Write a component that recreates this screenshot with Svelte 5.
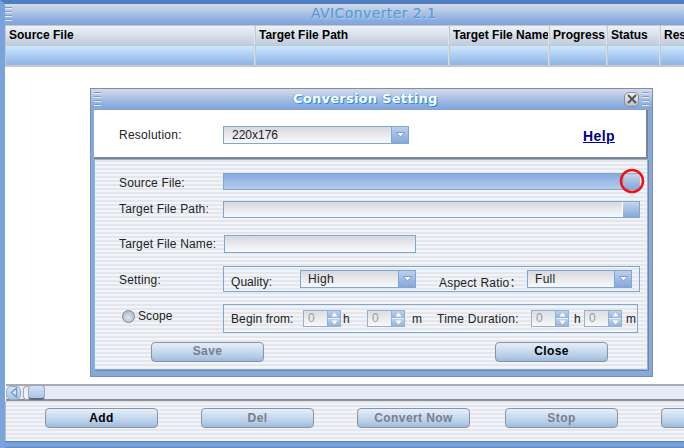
<script>
  const columns = [
    { name: 'Source File', width: 249 },
    { name: 'Target File Path', width: 193 },
    { name: 'Target File Name', width: 99 },
    { name: 'Progress', width: 57 },
    { name: 'Status', width: 52 },
    { name: 'Result', width: 60 }
  ];
  const actions = [
    { name: 'Add', on: true },
    { name: 'Del', on: false },
    { name: 'Convert Now', on: false },
    { name: 'Stop', on: false },
    { name: '', on: false }
  ];
</script>

{#snippet grip()}
  <span class="grip"><i></i><i></i><i></i><i></i></span>
{/snippet}

{#snippet arrow()}
  <span class="drop"><svg width="9" height="6" viewBox="0 0 9 6"><path d="M0.5 0.5H8.5L4.5 5Z" fill="#fff" stroke="#6f8fb5" stroke-width="0.8"/></svg></span>
{/snippet}

{#snippet spin()}
  <span class="spin">
    <span class="spin-val">0</span>
    <span class="spin-btns">
      <span><svg width="7" height="5" viewBox="0 0 7 5"><path d="M3.5 0.5L6.5 4.5H0.5Z" fill="#fff"/></svg></span>
      <span><svg width="7" height="5" viewBox="0 0 7 5"><path d="M0.5 0.5H6.5L3.5 4.5Z" fill="#fff"/></svg></span>
    </span>
  </span>
{/snippet}

<div class="app">
  <header class="titlebar">
    {@render grip()}
    <span class="app-title">AVIConverter 2.1</span>
  </header>

  <div class="table">
    <div class="thead">
      {#each columns as c}
        <div class="th" style={`width:${c.width}px`}>{c.name}</div>
      {/each}
    </div>
    <div class="tbody">
      {#each columns as c}
        <div class="td" style={`width:${c.width}px`}></div>
      {/each}
    </div>
  </div>

  <main class="canvas">
    <section class="dialog">
      <header class="dlg-title">
        {@render grip()}
        <span class="dlg-name">Conversion Setting</span>
        <span class="close"><svg width="10" height="10" viewBox="0 0 10 10"><path d="M1 1L9 9M9 1L1 9" stroke="#555" stroke-width="2"/></svg></span>
        {@render grip()}
      </header>
      <div class="dlg-top">
        <label class="res-label" for="res">Resolution:</label>
        <div class="combo res-combo" id="res"><span class="val">220x176</span>{@render arrow()}</div>
        <a class="help" href="#help">Help</a>
      </div>
      <div class="dlg-body">
        <div class="row r-source">
          <span class="lbl">Source File:</span>
          <div class="field active"><span class="browse hot"></span></div>
          <svg class="ring" width="26" height="26" viewBox="0 0 26 26"><circle cx="13" cy="13" r="11" fill="none" stroke="#f01010" stroke-width="2.5"/></svg>
        </div>
        <div class="row r-path">
          <span class="lbl">Target File Path:</span>
          <div class="field"><span class="browse"></span></div>
        </div>
        <div class="row r-name">
          <span class="lbl">Target File Name:</span>
          <div class="field short"></div>
        </div>
        <div class="row r-setting">
          <span class="lbl">Setting:</span>
          <div class="group g-setting">
            <span class="q-lbl">Quality:</span>
            <div class="combo q-combo"><span class="val">High</span>{@render arrow()}</div>
            <span class="a-lbl">Aspect Ratio：</span>
            <div class="combo a-combo"><span class="val">Full</span>{@render arrow()}</div>
          </div>
        </div>
        <div class="row r-scope">
          <span class="scope"><span class="radio"></span>Scope</span>
          <div class="group g-scope">
            <span class="b-lbl">Begin from:</span>
            {@render spin()}
            <span class="unit u1">h</span>
            {@render spin()}
            <span class="unit u2">m</span>
            <span class="t-lbl">Time Duration:</span>
            {@render spin()}
            <span class="unit u3">h</span>
            {@render spin()}
            <span class="unit u4">m</span>
          </div>
        </div>
        <div class="row r-btns">
          <button class="btn off">Save</button>
          <button class="btn">Close</button>
        </div>
      </div>
    </section>
  </main>

  <div class="hscroll">
    <span class="sc-left"><svg width="8" height="11" viewBox="0 0 8 11"><path d="M6.5 1L1.5 5.5L6.5 10Z" fill="#e8f0fb" stroke="#6f9bd0" stroke-width="1.4"/></svg></span>
    <span class="sc-cap"></span>
    <span class="sc-thumb"></span>
  </div>

  <footer class="actions">
    {#each actions as a}
      <button class="btn" class:off={!a.on}>{a.name}</button>
    {/each}
  </footer>
</div>

<style>
  :global(body) { margin: 0; background: #fff; overflow: hidden; }
  .app {
    width: 684px; height: 448px; box-sizing: border-box; overflow: hidden;
    display: flex; flex-direction: column;
    font-family: "Liberation Sans", Arial, sans-serif; font-size: 12px; color: #222;
    border-left: 5px solid #7aa3dc;
    border-top: 4px solid #4f7fc0;
    background: #fff;
  }
  .titlebar {
    height: 20px; flex: none; margin-left: -1px; display: flex; align-items: center; position: relative;
    background: linear-gradient(#d3dbe8, #84a9e0 90%);
    border-bottom: 1px solid #8aa3c4;
  }
  .grip { display: flex; flex-direction: column; gap: 2px; width: 7px; flex: none; margin-left: 1px; }
  .grip i { display: block; height: 1px; background: #7f9cc8; border-bottom: 1px solid #e6eefb; }
  .app-title {
    position: absolute; left: 307px; top: 1px; font: 14px/16px "DejaVu Sans", sans-serif; letter-spacing: .4px;
    color: #4f9ad8; text-shadow: 1px 1px 0 #b8c8dc;
  }
  .table { flex: none; background: #c4c8d0; padding: 1px 0 2px 1px; }
  .thead, .tbody { display: flex; }
  .th {
    flex: none; box-sizing: border-box; height: 19px; padding: 0 0 0 3px; margin-right: 1px; line-height: 18px;
    font-weight: 700; font-size: 12px; color: #000; white-space: nowrap; overflow: hidden;
    background: linear-gradient(#eef2f6, #bfcbdc);
    border-right: 1px solid #dfe6ef;
  }
  .tbody { margin-top: 1px; }
  .td {
    flex: none; box-sizing: border-box; height: 19px; margin-right: 1px;
    background: linear-gradient(#c8e8fb, #8fb3e6);
    border-right: 1px solid #cfdcec;
  }
  .canvas { flex: 1; min-height: 0; position: relative; background: #fff; }
  .dialog {
    position: absolute; left: 85px; top: 21px; width: 563px; height: 289px; box-sizing: border-box;
    display: flex; flex-direction: column;
    border: 1px solid #7d8fa8; background: #84a9e0;
    padding: 0 4px 6px 3px;
  }
  .dlg-title {
    margin: 0 -4px 0 -3px; height: 21px; flex: none; display: flex; align-items: center; position: relative;
    background: linear-gradient(#d4dbe8, #84a9e0 90%);
    border-bottom: 1px solid #8aa3c4; box-sizing: border-box; padding-right: 3px;
  }
  .dlg-title .grip { margin-left: 3px; }
  .dlg-name {
    position: absolute; left: 202px; top: 1px; font: 700 13px/18px "DejaVu Sans", sans-serif; letter-spacing: .25px;
    color: #fff; text-shadow: 1px 1px 0 #2e8ad8, -1px 0 0 #5aa7e5;
  }
  .close {
    margin-left: auto; width: 15px; height: 15px; box-sizing: border-box; border: 1px solid #8b8f98; border-radius: 5px;
    background: linear-gradient(#f3f3f3, #b9bcc2); display: flex; align-items: center; justify-content: center;
  }
  .dlg-top {
    height: 49px; flex: none; box-sizing: border-box; background: #fff;
    display: flex; align-items: flex-start;
    border-right: 2px solid #7f8288; border-bottom: 2px solid #82868c;
  }
  .res-label { margin: 18px 0 0 25px; width: 104px; letter-spacing: .25px; }
  .combo {
    box-sizing: border-box; height: 18px; border: 1px solid #7fa8cc; display: flex; flex: none;
    background: linear-gradient(#d6d8de, #fafafc);
  }
  .val { flex: 1; padding-left: 7px; line-height: 16px; letter-spacing: .3px; }
  .res-combo .val { letter-spacing: 0; padding-left: 8px; }
  .drop {
    width: 16px; flex: none; border-left: 1px solid #7fa8cc; display: flex; align-items: center; justify-content: center;
    background: linear-gradient(#b9cfee, #86a8dc);
  }
  .res-combo { width: 186px; margin-top: 16px; }
  .help {
    margin: 18px 0 0 174px; color: #00008b; font-size: 14px; font-weight: 700; text-decoration: underline; letter-spacing: .4px;
  }
  .dlg-body {
    flex: 1; min-height: 0; display: flex; flex-direction: column;
    border: 1px solid #8fb3d6;
    background: repeating-linear-gradient(#e4e6ee 0 2px, #f3f4f7 2px 4px);
    padding-left: 1px; box-shadow: 1px 1px 0 #7f8288;
  }
  .row { display: flex; align-items: center; position: relative; flex: none; }
  .lbl { width: 104px; flex: none; padding-left: 23px; letter-spacing: .15px; white-space: nowrap; }
  .r-source { margin-top: 13px; height: 17px; }
  .r-source .lbl { margin-top: 2px; }
  .r-path { margin-top: 11px; height: 17px; }
  .r-path .lbl { margin-top: -2px; }
  .r-name { margin-top: 17px; height: 17px; }
  .r-setting { margin-top: 14px; height: 26px; }
  .r-setting .lbl { margin-top: 2px; }
  .r-scope { margin-top: 12px; height: 29px; }
  .r-btns { margin-top: 9px; height: 20px; padding-left: 55px; gap: 231px; }
  .r-btns .btn { padding-bottom: 3px; }
  .field {
    box-sizing: border-box; width: 417px; height: 17px; border: 1px solid #7fa8cc; display: flex; justify-content: flex-end;
    background: linear-gradient(#d6d8de, #fafafc);
  }
  .field.active { background: linear-gradient(#84a9e0, #b8cdea); border-right: 0; }
  .field.short { width: 192px; margin-left: 1px; height: 18px; }
  .browse {
    width: 16px; flex: none; border-left: 1px solid #fff; background: linear-gradient(#c6d5ea, #86a8dc);
  }
  .browse.hot { border-left-color: #9ab9e0; }
  .ring { position: absolute; left: 523px; top: -5px; }
  .group { box-sizing: border-box; border: 1px solid #7fa8cc; display: flex; align-items: center; }
  .g-setting { width: 417px; height: 26px; }
  .q-lbl { margin-left: 7px; width: 69px; letter-spacing: .05px; padding-top: 5px; }
  .q-combo { width: 116px; }
  .a-lbl { margin-left: 23px; width: 88px; letter-spacing: .2px; padding-top: 5px; white-space: nowrap; font-family: "Liberation Sans", "Noto Sans CJK SC", sans-serif; }
  .a-combo { width: 105px; }
  .scope { width: 101px; flex: none; padding-left: 26px; display: flex; align-items: center; gap: 3px; letter-spacing: .1px; margin-top: -5px; }
  .radio {
    width: 13px; height: 13px; box-sizing: border-box; border-radius: 50%; border: 1px solid #7c8694;
    background: radial-gradient(circle at 50% 60%, #dfe5ee, #9fb0c6);
  }
  .g-scope { width: 415px; height: 29px; }
  .spin {
    box-sizing: border-box; width: 38px; height: 17px; border: 1px solid #8fb3d6; display: flex; flex: none;
    background: linear-gradient(#dcdee4, #f8f8fa);
  }
  .spin-val { flex: 1; padding-left: 4px; color: #999; line-height: 15px; }
  .spin-btns { width: 12px; border-left: 1px solid #8fb3d6; display: flex; flex-direction: column; }
  .spin-btns span { flex: 1; display: flex; align-items: center; justify-content: center; background: linear-gradient(#c0d0e8, #94b4dc); }
  .spin-btns span + span { border-top: 1px solid #e6eefb; }
  .b-lbl { margin-left: 7px; width: 72px; letter-spacing: .1px; flex: none; }
  .t-lbl { width: 94px; letter-spacing: .25px; flex: none; white-space: nowrap; }
  .unit { flex: none; box-sizing: border-box; }
  .u1 { width: 26px; padding-left: 2px; }
  .u2 { width: 32px; padding-left: 7px; }
  .u3 { width: 15px; padding-left: 5px; }
  .u4 { padding-left: 4px; }
  .btn {
    box-sizing: border-box; width: 113px; height: 20px; padding: 0; flex: none;
    border: 1px solid #8a93a6; border-radius: 4px;
    background: linear-gradient(#e6eff9, #b8cfe9 70%, #9db9dc);
    font: 700 12px/16px "Liberation Sans", sans-serif; letter-spacing: .4px; color: #000;
  }
  .btn.off { color: #777f8b; }
  .hscroll {
    height: 17px; flex: none; box-sizing: border-box; display: flex; align-items: center; margin-left: 1px;
    background: #e6e9f7; border-top: 2px solid #a8abb2; border-bottom: 2px solid #8b9098;
  }
  .sc-left {
    width: 15px; height: 14px; box-sizing: border-box; border: 1px solid #9ab; border-radius: 5px; display: flex; align-items: center; justify-content: center;
    background: linear-gradient(#d6e4f5, #a8c4e8);
  }
  .sc-cap {
    width: 5px; height: 14px; margin-left: 2px; box-sizing: border-box; border: 1px solid #9aa8bc; border-right: 0; border-radius: 4px 0 0 4px;
    background: #eef1f8;
  }
  .sc-thumb {
    width: 17px; height: 15px; box-sizing: border-box; border: 1px solid #9aa8bc; border-bottom: 2px solid #5f6b7c; border-radius: 4px;
    background: linear-gradient(#d6e4f5, #a8c4e8);
  }
  .actions {
    flex: none; height: 40px; box-sizing: border-box; padding: 7px 0 0 39px; display: flex; gap: 43px;
    background: repeating-linear-gradient(#e4e6ee 0 2px, #f3f4f7 2px 4px);
    border-left: 1px solid #b9bcc2; overflow: hidden;
  }
  .actions .btn:nth-child(4) { margin-left: -8px; }
  .app::after {
    content: ""; height: 7px; flex: none; margin-left: -5px;
    background: linear-gradient(#4f7fc0, #7aa3dc 35%, #7aa3dc 70%, #5e86bd);
  }
</style>
